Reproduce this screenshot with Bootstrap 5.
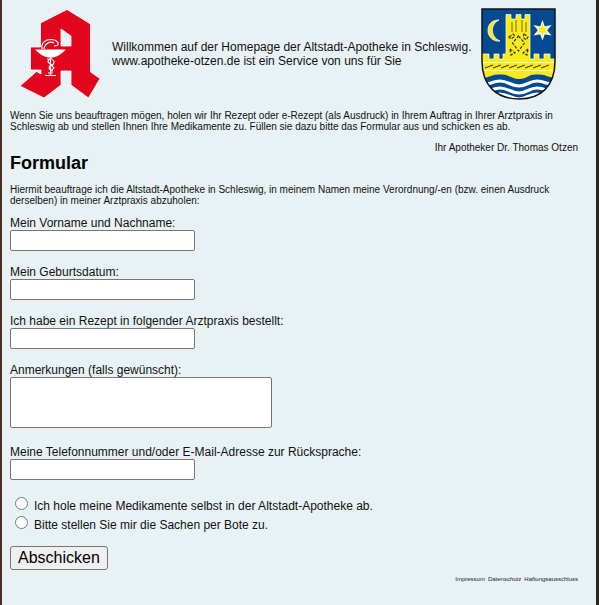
<!DOCTYPE html>
<html lang="de">
<head>
<meta charset="utf-8">
<meta name="viewport" content="width=device-width, initial-scale=1">
<title>Altstadt-Apotheke Schleswig</title>
<link rel="stylesheet" href="https://cdn.jsdelivr.net/npm/bootstrap@5.3.0/dist/css/bootstrap.min.css">
<style>
body { background: #e8f1f3; color: #111; font: 12px/14px "Liberation Sans", Arial, sans-serif; }
.page { border-left: 2px solid #49301f; border-right: 3px solid #2e2219; padding: 8px 18px 8px 8px; }
.logo-a { width: 102px; height: 92px; }
.arms { width: 76px; height: 92px; margin-left: 9px; }
.note { font-size: 10px; line-height: 11px; margin: 10px 0; }
.signature { margin-bottom: 0; }
h1 { font-size: 18px; line-height: 20px; font-weight: 700; color: #000; margin: 0 0 11px; }
.field { margin-bottom: 14px; }
.field input, .field textarea { border: 1px solid #767676; border-radius: 2px; background: #fff; padding: 2px; display: block; max-width: 100%; }
.field input { width: 185px; height: 21px; }
.field textarea { width: 262px; height: 51px; resize: none; }
.field-long { margin-bottom: 17px; }
.choices { margin: 16px 0 12px; }
.choice { height: 19px; }
.choice input { width: 13px; height: 13px; margin: 0 6px 5px 5px; }
.send { font-size: 16px; line-height: 20px; padding: 1px 7px; border: 1px solid #767676; border-radius: 3px; background: #efefef; color: #000; }
.legal { font-size: 6px; line-height: 7px; gap: 3px; margin-top: 6px; }
.legal a { color: #222; }
</style>
</head>
<body>
<div class="page min-vh-100">
<header class="d-flex align-items-center">
<svg class="logo-a flex-shrink-0" viewBox="10 8 102 92" role="img" aria-label="Apotheke">
<path fill="#e1051e" stroke="#fff" stroke-width=".8" d="M67 9.500 90.500 24V72l9.500 6.500L88.500 98 71 85V71H61V85L44 98 20 86 36.500 71.500 41 74V70H30.500V47H40.500V23ZM61 29V46H71V36Z"/>
<path fill="#fff" d="M35 49.500H66Q60 56 53 57.500H48Q41 56 35 49.500Z"/>
<path fill="none" stroke="#fff" stroke-width="1.200" d="M42 49C41 42 46 39.500 51 39.500C57 39.500 60 44 57 45.500L54 46M44 49C45 43 50 41 54 43M47 59Q54 59 54 62T49.500 66Q48 70 53 71M50.500 57V75M45 75.500H56M52 58Q46 61 49 63T54 68L51 71M48 73H53"/>
</svg>
<div>Willkommen auf der Homepage der Altstadt-Apotheke in Schleswig.<br>www.apotheke-otzen.de ist ein Service von uns für Sie</div>
<svg class="arms flex-shrink-0" viewBox="481 8 76 92" role="img" aria-label="Wappen von Schleswig">
<defs><clipPath id="shield"><path d="M482 9H555V61C555 86 541 99 519 99S482 86 482 61Z"/></clipPath></defs>
<g clip-path="url(#shield)">
<path fill="#044a91" d="M481 8H557V100H481Z"/>
<path fill="#f8e91b" stroke="#fff" stroke-width=".7" d="M506 14.500H511V19H516V14.500H521V19H525V14.500H530V59H534V54H539V59H544V54H550V59H557V74H481V54H489V59H494V54H499V59H503V54H506Z"/>
<path fill="#f8e91b" stroke="#fff" stroke-width=".8" d="M499 20C490 20 488 26 488 31S493 42 500 41C490 37 490 24 499 20Z"/>
<path fill="#fff" d="m542.500 20 2.300 6.500 6.700-1.500-4.400 5.300 4.400 5.200-6.700-1.300-2.300 6.300-2.300-6.300-6.700 1.300 4.400-5.200-4.400-5.300 6.700 1.500Z"/>
<path fill="#f8e91b" d="m542.500 22.500 1.300 5.500 4.700-1-3.500 3.300 3.500 3.200-4.700-1-1.300 4.500-1.300-4.500-4.700 1 3.500-3.200-3.500-3.300 4.700 1Z"/>
<path fill="none" stroke="#786f13" d="M512 22V32M516 20V32M522 20V32M526 22V32"/>
<path fill="none" stroke="#343b20" stroke-width="1.200" stroke-dasharray="3 1.500" d="m518.500 36 6 7-6 8-6-8ZM509 37l4-3 2 2-4 3ZM524 34l4 3-2 3-3-3ZM510 49l5 4-4 2ZM528 49l-5 4 4 2Z"/>
<path stroke="#fff" stroke-width=".8" d="M482 62.500H556M482 70.500H556"/>
<path fill="none" stroke="#49470f" stroke-width="1.300" d="m485 68 8-3m0 3 8-3m0 3 8-3m0 3 8-3m0 3 8-3m0 3 8-3m0 3 8-3m0 3 8-3"/>
<path fill="#f8e91b" d="M481 72H557V78C548 78 545 74 537 74S527 79 519 79S508 74 500 74S490 78 481 78Z"/>
<path fill="none" stroke="#fff" stroke-width="3.200" d="M481 85C490 85 492 81 500 81S511 86 519 86S529 81 537 81S548 85 557 85M481 92C490 92 492 88 500 88S511 93 519 93S529 88 537 88S548 92 557 92M481 99C490 99 492 94 500 94S511 99 519 99S529 94 537 94S548 99 557 99"/>
</g>
<path fill="none" stroke="#151619" stroke-width="1.500" d="M482 9H555V61C555 86 541 99 519 99S482 86 482 61Z"/>
</svg>
</header>
<main>
<p class="note">Wenn Sie uns beauftragen mögen, holen wir Ihr Rezept oder e-Rezept (als Ausdruck) in Ihrem Auftrag in Ihrer Arztpraxis in Schleswig ab und stellen Ihnen Ihre Medikamente zu. Füllen sie dazu bitte das Formular aus und schicken es ab.</p>
<p class="note signature text-end">Ihr Apotheker Dr. Thomas Otzen</p>
<h1>Formular</h1>
<p class="note">Hiermit beauftrage ich die Altstadt-Apotheke in Schleswig, in meinem Namen meine Verordnung/-en (bzw. einen Ausdruck derselben) in meiner Arztpraxis abzuholen:</p>
<form>
<div class="field"><label class="d-block" for="name">Mein Vorname und Nachname:</label><input type="text" id="name"></div>
<div class="field"><label class="d-block" for="birth">Mein Geburtsdatum:</label><input type="text" id="birth"></div>
<div class="field"><label class="d-block" for="practice">Ich habe ein Rezept in folgender Arztpraxis bestellt:</label><input type="text" id="practice"></div>
<div class="field field-long"><label class="d-block" for="remarks">Anmerkungen (falls gewünscht):</label><textarea id="remarks"></textarea></div>
<div class="field"><label class="d-block" for="contact">Meine Telefonnummer und/oder E-Mail-Adresse zur Rücksprache:</label><input type="text" id="contact"></div>
<div class="choices">
<div class="choice d-flex align-items-center"><input type="radio" name="delivery" id="pickup"><label for="pickup">Ich hole meine Medikamente selbst in der Altstadt-Apotheke ab.</label></div>
<div class="choice d-flex align-items-center"><input type="radio" name="delivery" id="courier"><label for="courier">Bitte stellen Sie mir die Sachen per Bote zu.</label></div>
</div>
<button class="send d-block" type="submit">Abschicken</button>
</form>
</main>
<footer class="legal d-flex justify-content-end"><a class="text-decoration-none" href="#impressum">Impressum</a><a class="text-decoration-none" href="#datenschutz">Datenschutz</a><a class="text-decoration-none" href="#haftung">Haftungsausschluss</a></footer>
</div>
<script src="https://cdn.jsdelivr.net/npm/bootstrap@5.3.0/dist/js/bootstrap.bundle.min.js"></script>
</body>
</html>
